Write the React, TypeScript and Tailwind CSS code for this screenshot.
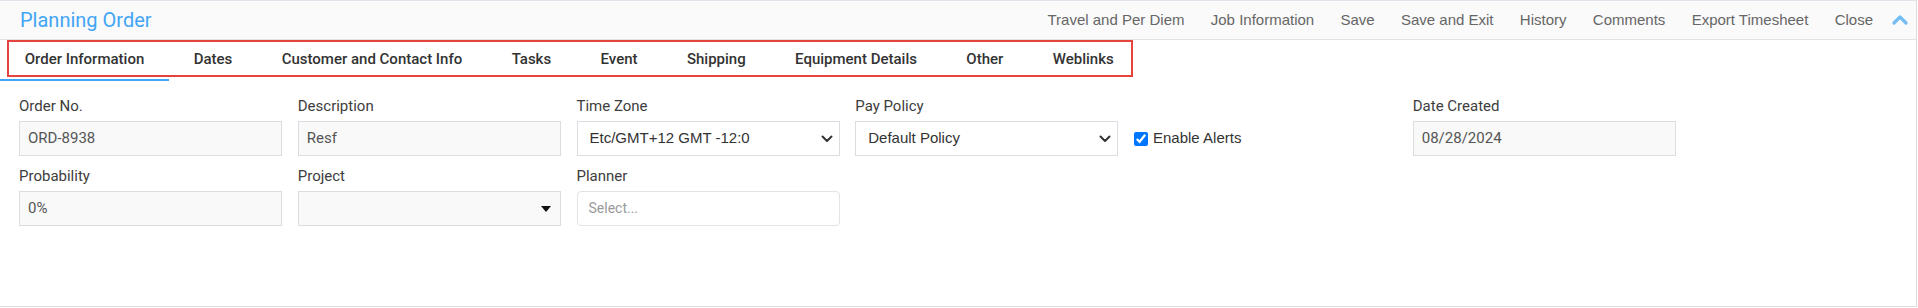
const actions = [
  "Travel and Per Diem",
  "Job Information",
  "Save",
  "Save and Exit",
  "History",
  "Comments",
  "Export Timesheet",
  "Close",
];

const tabs = [
  "Order Information",
  "Dates",
  "Customer and Contact Info",
  "Tasks",
  "Event",
  "Shipping",
  "Equipment Details",
  "Other",
  "Weblinks",
];

const Label = ({ text }: { text: string }) => (
  <div className="h-[20px] leading-[20px] text-[15px] text-[#3d3d3d] mb-[5px]">
    {text}
  </div>
);

const ReadOnlyInput = ({ label, value }: { label: string; value: string }) => (
  <div>
    <Label text={label} />
    <div className="h-[35px] border border-[#dcdde2] bg-[#f9f9f9] pl-[8px] flex items-center text-[15px] text-[#555]">
      {value}
    </div>
  </div>
);

const SelectBox = ({ label, value }: { label: string; value: string }) => (
  <div>
    <Label text={label} />
    <div className="h-[35px] border border-[#dcdde2] bg-white pl-[12px] pr-[6px] flex items-center justify-between text-[15px] text-[#333] font-['Liberation_Sans',Arial,sans-serif]">
      <span>{value}</span>
      <svg width="12" height="8" viewBox="0 0 12 8" fill="none">
        <polyline
          points="1.5,1.5 6,6 10.5,1.5"
          stroke="#333"
          strokeWidth="2"
          strokeLinecap="round"
          strokeLinejoin="round"
        />
      </svg>
    </div>
  </div>
);

export default function App() {
  return (
    <div className="w-[1917px] h-[307px] bg-white border-t border-t-[#dfe3ea] border-r border-r-[#dcdcdc] border-b border-b-[#dcdcdc] font-['Roboto',sans-serif]">
      {/* Header */}
      <div className="h-[39px] bg-[#fafafa] border-b border-b-[#e2e2e2] flex items-center justify-between pl-[20px] pr-[8px]">
        <h1 className="text-[20px] text-[#42a5f5] leading-none">
          Planning Order
        </h1>
        <div className="flex items-center">
          <div className="flex items-center gap-[26.3px] text-[15px] text-[#666] font-['Liberation_Sans',Arial,sans-serif]">
            {actions.map((a) => (
              <span key={a}>{a}</span>
            ))}
          </div>
          <svg
            className="ml-[19px]"
            width="16"
            height="12"
            viewBox="0 0 16 12"
            fill="none"
          >
            <polyline
              points="2,9 8,3 14,9"
              stroke="#74bdf5"
              strokeWidth="3.2"
              strokeLinecap="round"
              strokeLinejoin="round"
            />
          </svg>
        </div>
      </div>

      {/* Tabs */}
      <div className="relative flex">
        {tabs.map((t, i) => (
          <div
            key={t}
            className={`h-[41px] px-[24.7px] flex items-center text-[15px] font-medium text-[#333] border-b-2 ${
              i === 0 ? "border-b-[#42a5f5]" : "border-b-transparent"
            }`}
          >
            {t}
          </div>
        ))}
        {/* annotation box */}
        <div className="absolute left-[7px] top-0 w-[1126px] h-[37px] border-2 border-[#e4443d] pointer-events-none" />
      </div>

      {/* Form */}
      <div className="pt-[15px] pl-[19px] grid grid-cols-[repeat(6,263px)] gap-x-[15.75px] gap-y-[10px]">
        <ReadOnlyInput label="Order No." value="ORD-8938" />
        <ReadOnlyInput label="Description" value="Resf" />
        <SelectBox label="Time Zone" value="Etc/GMT+12 GMT -12:0" />
        <SelectBox label="Pay Policy" value="Default Policy" />
        <div className="mt-[25px] h-[35px] flex items-center gap-[5px]">
          <input
            type="checkbox"
            defaultChecked
            className="w-[14px] h-[14px] m-0 accent-[#0075ff]"
          />
          <span className="text-[15px] text-[#333] font-['Liberation_Sans',Arial,sans-serif]">
            Enable Alerts
          </span>
        </div>
        <ReadOnlyInput label="Date Created" value="08/28/2024" />

        <ReadOnlyInput label="Probability" value="0%" />
        <div>
          <Label text="Project" />
          <div className="h-[35px] border border-[#dcdde2] bg-[#f9f9f9] pr-[9px] flex items-center justify-end">
            <svg width="10" height="6" viewBox="0 0 10 6">
              <polygon points="0,0 10,0 5,6" fill="#111" />
            </svg>
          </div>
        </div>
        <div>
          <Label text="Planner" />
          <div className="h-[35px] border border-[#e2e3e8] rounded-[4px] bg-white pl-[11px] flex items-center text-[14px] text-[#9a9a9a]">
            Select...
          </div>
        </div>
      </div>
    </div>
  );
}
